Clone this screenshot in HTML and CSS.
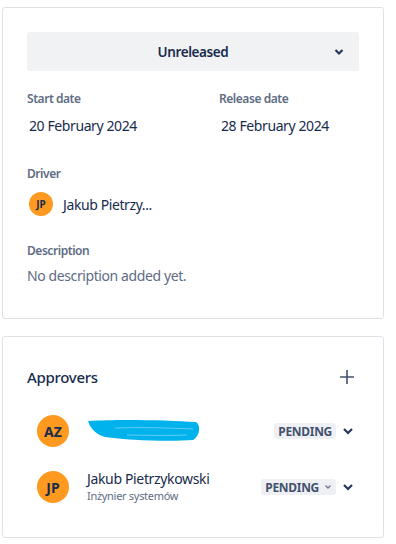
FILE: index.html
```html
<!DOCTYPE html>
<html lang="en">
<head>
    <meta charset="UTF-8">
    <title>Release details</title>
    <link rel="stylesheet" href="styles.css">
</head>
<body>
    <main class="page">
        <section class="card details">
            <button class="status-select">
                <span>Unreleased</span>
                <svg class="chev" width="10" height="8" viewBox="0 0 10 8"><path d="M1.5 2 L5 5.5 L8.5 2" fill="none" stroke="#253858" stroke-width="2.2"/></svg>
            </button>
            <div class="dates">
                <div class="field">
                    <div class="label">Start date</div>
                    <div class="value">20 February 2024</div>
                </div>
                <div class="field">
                    <div class="label">Release date</div>
                    <div class="value">28 February 2024</div>
                </div>
            </div>
            <div class="field driver">
                <div class="label">Driver</div>
                <div class="person">
                    <span class="avatar small">JP</span>
                    <span class="person-name">Jakub Pietrzy...</span>
                </div>
            </div>
            <div class="field desc">
                <div class="label">Description</div>
                <div class="desc-text">No description added yet.</div>
            </div>
        </section>

        <section class="card approvers">
            <div class="approvers-head">
                <h2>Approvers</h2>
                <svg width="16" height="16" viewBox="0 0 16 16"><path d="M8 1 V15 M1 8 H15" stroke="#42526e" stroke-width="1.6"/></svg>
            </div>
            <ul class="approver-list">
                <li class="approver">
                    <span class="avatar">AZ</span>
                    <div class="approver-info">
                        <svg class="scribble" width="116" height="24" viewBox="0 0 116 24"><path d="M1 2 C30 0 80 1 109 3 C114 6 113 17 106 21 C80 23 40 21 18 18 C10 16 6 11 3 7 Z" fill="#00b2ec"/><path d="M28 9 C55 8 80 9 106 10 M40 16 C60 16 80 17 100 16" fill="none" stroke="#62cdf2" stroke-width="1"/></svg>
                    </div>
                    <span class="badge">PENDING</span>
                    <svg class="row-chev" width="12" height="10" viewBox="0 0 12 10"><path d="M2 3 L6 7 L10 3" fill="none" stroke="#253858" stroke-width="2.2"/></svg>
                </li>
                <li class="approver">
                    <span class="avatar">JP</span>
                    <div class="approver-info">
                        <div class="approver-name">Jakub Pietrzykowski</div>
                        <div class="approver-role">Inżynier systemów</div>
                    </div>
                    <span class="badge">PENDING <svg width="8" height="6" viewBox="0 0 8 6"><path d="M1.5 1.5 L4 4 L6.5 1.5" fill="none" stroke="#6b778c" stroke-width="1.3"/></svg></span>
                    <svg class="row-chev" width="12" height="10" viewBox="0 0 12 10"><path d="M2 3 L6 7 L10 3" fill="none" stroke="#253858" stroke-width="2.2"/></svg>
                </li>
            </ul>
        </section>
    </main>
</body>
</html>
```
FILE: styles.css
```css
html, body {
    margin: 0;
    padding: 0;
    background: #fff;
    font-family: "Noto Sans", "Open Sans", sans-serif;
    color: #172b4d;
}
.page {
    display: flex;
    flex-direction: column;
    gap: 17px;
    padding: 7px 0 0 2px;
    width: 382px;
}
.card {
    border: 1px solid #dfe1e6;
    border-radius: 3px;
}
.details {
    padding: 24px 24px 32px 24px;
}
.status-select {
    display: flex;
    align-items: center;
    justify-content: center;
    position: relative;
    width: 100%;
    height: 39px;
    border: none;
    border-radius: 3px;
    background: #f1f2f4;
    font-family: inherit;
    font-size: 13.5px;
    font-weight: 600;
    letter-spacing: -0.4px;
    color: #172b4d;
    padding: 0;
}
.status-select .chev {
    position: absolute;
    right: 15px;
    top: 16px;
}
.dates {
    display: grid;
    grid-template-columns: 192px 1fr;
    margin-top: 20px;
}
.label {
    font-size: 12px;
    line-height: 16px;
    font-weight: 600;
    letter-spacing: -0.45px;
    color: #5e6c84;
}
.value {
    font-size: 14px;
    line-height: 20px;
    letter-spacing: -0.4px;
    margin-top: 9px;
    padding-left: 2px;
}
.driver {
    margin-top: 30px;
}
.person {
    display: flex;
    align-items: center;
    gap: 10px;
    margin-top: 10px;
    padding-left: 2px;
}
.person-name {
    font-size: 14px;
    letter-spacing: -0.4px;
}
.avatar {
    display: flex;
    align-items: center;
    justify-content: center;
    width: 32px;
    height: 32px;
    flex: none;
    border-radius: 50%;
    background: #ff991f;
    color: #172b4d;
    font-size: 14px;
    font-weight: 700;
}
.avatar.small {
    width: 24px;
    height: 24px;
    font-size: 10px;
}
.desc {
    margin-top: 27px;
}
.desc-text {
    margin-top: 7px;
    font-size: 14px;
    line-height: 20px;
    letter-spacing: -0.4px;
    color: #5e6c84;
}
.approvers {
    padding: 30px 24px 33px 24px;
}
.approvers-head {
    display: flex;
    justify-content: space-between;
    align-items: center;
    padding-right: 4px;
}
.approvers-head h2 {
    margin: 0;
    font-size: 15px;
    line-height: 20px;
    font-weight: 500;
    letter-spacing: -0.3px;
}
.approver-list {
    list-style: none;
    margin: 28px 0 0 0;
    padding: 0 3px 0 10px;
    display: flex;
    flex-direction: column;
    gap: 23px;
}
.approver {
    display: flex;
    align-items: center;
}
.approver-info {
    flex: 1;
    margin-left: 18px;
}
.scribble {
    display: block;
}
.approver-name {
    font-size: 14px;
    line-height: 18px;
    letter-spacing: -0.35px;
}
.approver-role {
    font-size: 11px;
    line-height: 16px;
    letter-spacing: -0.3px;
    color: #5e6c84;
}
.badge {
    display: flex;
    align-items: center;
    gap: 5px;
    height: 16px;
    padding: 0 4px;
    border-radius: 3px;
    background: #eff0f3;
    color: #42526e;
    font-size: 12px;
    font-weight: 700;
    letter-spacing: -0.3px;
}
.row-chev {
    margin-left: 6px;
    margin-right: 2px;
}
```
